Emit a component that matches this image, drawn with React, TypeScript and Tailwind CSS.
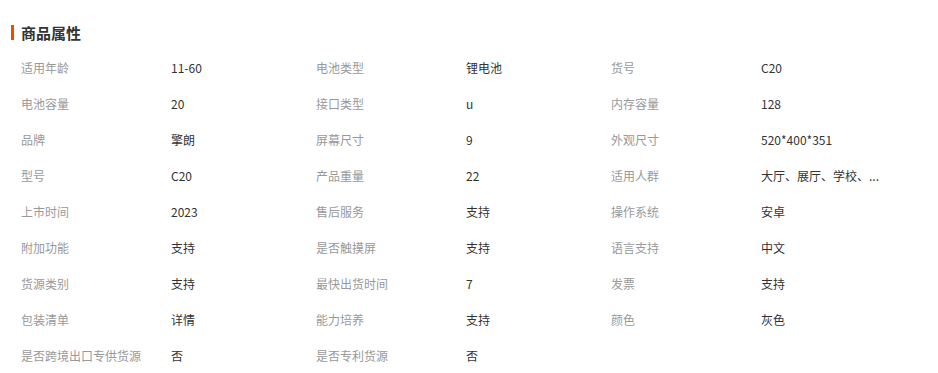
const attrs: [string, string][] = [
  ['适用年龄', '11-60'],
  ['电池类型', '锂电池'],
  ['货号', 'C20'],
  ['电池容量', '20'],
  ['接口类型', 'u'],
  ['内存容量', '128'],
  ['品牌', '擎朗'],
  ['屏幕尺寸', '9'],
  ['外观尺寸', '520*400*351'],
  ['型号', 'C20'],
  ['产品重量', '22'],
  ['适用人群', '大厅、展厅、学校、...'],
  ['上市时间', '2023'],
  ['售后服务', '支持'],
  ['操作系统', '安卓'],
  ['附加功能', '支持'],
  ['是否触摸屏', '支持'],
  ['语言支持', '中文'],
  ['货源类别', '支持'],
  ['最快出货时间', '7'],
  ['发票', '支持'],
  ['包装清单', '详情'],
  ['能力培养', '支持'],
  ['颜色', '灰色'],
  ['是否跨境出口专供货源', '否'],
  ['是否专利货源', '否'],
];

export default function App() {
  return (
    <div className="w-[938px] h-[373px] overflow-hidden bg-white font-['Noto_Sans_CJK_SC',sans-serif]">
      {/* 标题 */}
      <div className="flex items-center h-[15px] mt-[25px] pl-[11px]">
        <span className="w-[3px] h-[15px] bg-[#ff4400]" />
        <h2 className="ml-[7px] text-[15px] leading-none font-bold text-[#333]">商品属性</h2>
      </div>

      {/* 属性列表 */}
      <div className="mt-[10px] pl-[21px] grid grid-cols-[150px_145px_150px_145px_150px_145px]">
        {attrs.map(([label, value]) => (
          <div key={label} className="contents">
            <div className="h-[36px] flex items-center text-[12px] text-[#999] whitespace-nowrap">{label}</div>
            <div className="h-[36px] flex items-center text-[12px] text-[#333] whitespace-nowrap">{value}</div>
          </div>
        ))}
      </div>
    </div>
  );
}
